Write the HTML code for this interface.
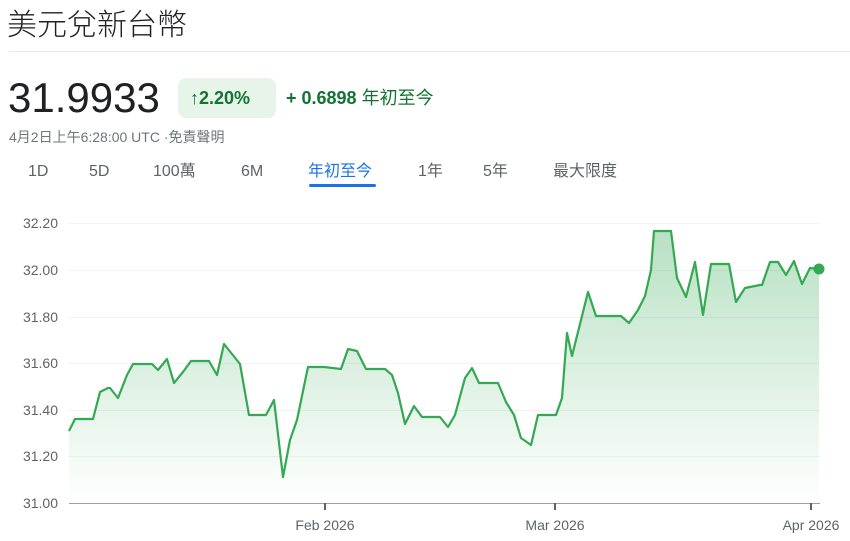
<!DOCTYPE html>
<html><head><meta charset="utf-8"><style>
body{margin:0;width:850px;height:541px;background:#fff;font-family:"Liberation Sans","Noto Sans CJK TC",sans-serif;position:relative;overflow:hidden}
.a{position:absolute;white-space:nowrap}
.tab{position:absolute;top:162px;font-size:16px;line-height:20px;height:20px;color:#5f6368}
</style></head><body>
<div class="a" style="left:7px;top:2px;font-size:30px;line-height:40px;color:#202124;font-family:'Noto Sans CJK TC',sans-serif;font-weight:300">美元兌新台幣</div>
<div class="a" style="left:9px;top:51px;width:841px;height:1px;background:#e8eaed"></div>
<div class="a" style="left:8px;top:74px;font-size:42px;line-height:48px;color:#202124">31.9933</div>
<div class="a" style="left:178px;top:78px;width:98px;height:40px;border-radius:8px;background:#e6f4ea"></div>
<div class="a" style="left:190px;top:87px;font-size:18px;line-height:22px;color:#137333;font-weight:bold">↑2.20%</div>
<div class="a" style="left:286px;top:87px;font-size:18px;line-height:22px;color:#137333"><b>+ 0.6898</b> 年初至今</div>
<div class="a" style="left:9px;top:128px;font-size:14px;line-height:18px;color:#70757a">4月2日上午6:28:00 UTC ·免責聲明</div>
<div class="tab" style="left:28px">1D</div>
<div class="tab" style="left:89px">5D</div>
<div class="tab" style="left:153px">100萬</div>
<div class="tab" style="left:241px">6M</div>
<div class="tab" style="left:308px;color:#1a73e8">年初至今</div>
<div class="a" style="left:309px;top:184px;width:67px;height:3px;background:#1a73e8;border-radius:2px"></div>
<div class="tab" style="left:418px">1年</div>
<div class="tab" style="left:483px">5年</div>
<div class="tab" style="left:553px">最大限度</div>
<svg class="a" style="left:0;top:0" width="850" height="541">
<defs><linearGradient id="g" x1="0" y1="0" x2="0" y2="1"><stop offset="0" stop-color="#34a853" stop-opacity="0.35"/><stop offset="1" stop-color="#34a853" stop-opacity="0"/></linearGradient></defs>
<g stroke="#f1f3f4" stroke-width="1">
<line x1="68" x2="820" y1="223.5" y2="223.5"/><line x1="68" x2="820" y1="270.5" y2="270.5"/><line x1="68" x2="820" y1="317.5" y2="317.5"/><line x1="68" x2="820" y1="363.5" y2="363.5"/><line x1="68" x2="820" y1="410.5" y2="410.5"/><line x1="68" x2="820" y1="456.5" y2="456.5"/>
</g>
<g font-size="14" fill="#5f6368" font-family="Liberation Sans">
<text x="58" y="228" text-anchor="end">32.20</text><text x="58" y="275" text-anchor="end">32.00</text><text x="58" y="322" text-anchor="end">31.80</text><text x="58" y="368" text-anchor="end">31.60</text><text x="58" y="415" text-anchor="end">31.40</text><text x="58" y="461" text-anchor="end">31.20</text><text x="58" y="508" text-anchor="end">31.00</text>
<text x="325" y="530" text-anchor="middle">Feb 2026</text><text x="555" y="530" text-anchor="middle">Mar 2026</text><text x="811" y="530" text-anchor="middle">Apr 2026</text>
</g>
<path d="M69,431 L75,419 L93,419 L100,392 L108,388 L110,388 L118,398 L127,375 L133,364 L152,364 L158,370 L167,359 L174,383 L183,372 L191,361 L209,361 L217,375 L224,344 L232,354 L240,364 L249,415 L266,415 L274,400 L283,477 L290,440 L297,420 L308,367 L324,367 L341,369 L348,349 L357,351 L366,369 L385,369 L392,375 L398,393 L405,424 L414,406 L422,417 L440,417 L448,427 L455,415 L465,378 L472,368 L479,383 L498,383 L506,402 L514,415 L521,438 L531,445 L538,415 L556,415 L562,398 L567,333 L572,356 L588,292 L596,316 L621,316 L629,323 L638,310 L645,296 L651,270 L654,231 L671,231 L677,278 L686,297 L695,262 L703,315 L711,264 L729,264 L736,302 L745,288 L760,285 L762,285 L770,262 L778,262 L786,275 L794,261 L802,284 L810,268 L819,269 L819,503 L69,503 Z" fill="url(#g)"/>
<path d="M69,431 L75,419 L93,419 L100,392 L108,388 L110,388 L118,398 L127,375 L133,364 L152,364 L158,370 L167,359 L174,383 L183,372 L191,361 L209,361 L217,375 L224,344 L232,354 L240,364 L249,415 L266,415 L274,400 L283,477 L290,440 L297,420 L308,367 L324,367 L341,369 L348,349 L357,351 L366,369 L385,369 L392,375 L398,393 L405,424 L414,406 L422,417 L440,417 L448,427 L455,415 L465,378 L472,368 L479,383 L498,383 L506,402 L514,415 L521,438 L531,445 L538,415 L556,415 L562,398 L567,333 L572,356 L588,292 L596,316 L621,316 L629,323 L638,310 L645,296 L651,270 L654,231 L671,231 L677,278 L686,297 L695,262 L703,315 L711,264 L729,264 L736,302 L745,288 L760,285 L762,285 L770,262 L778,262 L786,275 L794,261 L802,284 L810,268 L819,269" fill="none" stroke="#34a853" stroke-width="2.2" stroke-linejoin="round"/>
<line x1="69" x2="820" y1="503.5" y2="503.5" stroke="#9aa0a6" stroke-width="1"/>
<g stroke="#5f6368" stroke-width="2"><line x1="325" x2="325" y1="503" y2="510"/><line x1="555" x2="555" y1="503" y2="510"/><line x1="811" x2="811" y1="503" y2="510"/></g>
<circle cx="819" cy="269" r="5.5" fill="#34a853"/>
</svg>
</body></html>
